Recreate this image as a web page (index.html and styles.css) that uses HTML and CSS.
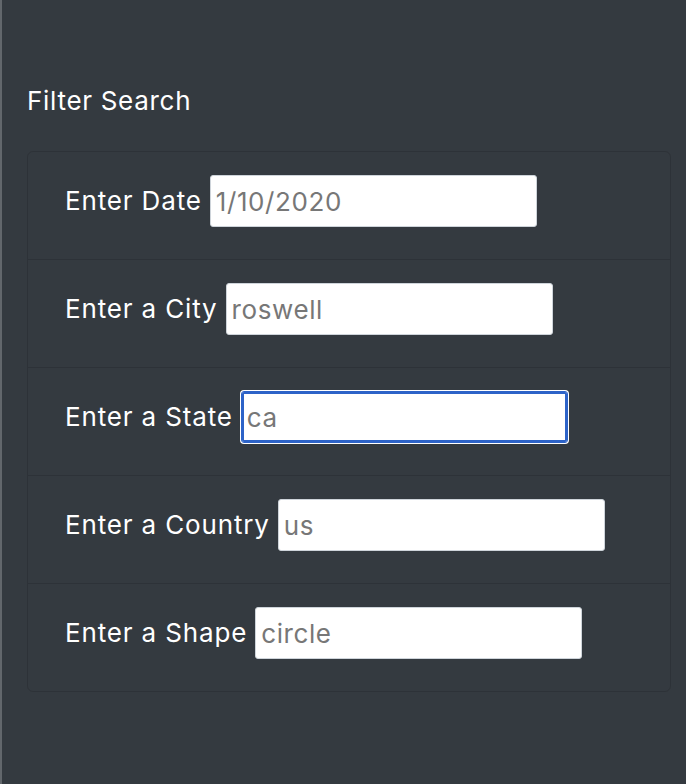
FILE: index.html
```html
<!DOCTYPE html>
<html lang="en">
<head>
<meta charset="utf-8">
<title>Filter Search</title>
<link rel="stylesheet" href="styles.css">
</head>
<body>
<aside class="sidebar">
  <h5 class="title">Filter Search</h5>
  <form class="card">
    <ul class="list">
      <li class="item">
        <label class="label" for="date">Enter Date</label>
        <input class="field" id="date" type="text" value="1/10/2020">
      </li>
      <li class="item">
        <label class="label" for="city">Enter a City</label>
        <input class="field" id="city" type="text" value="roswell">
      </li>
      <li class="item">
        <label class="label" for="state">Enter a State</label>
        <input class="field focused" id="state" type="text" value="ca">
      </li>
      <li class="item">
        <label class="label" for="country">Enter a Country</label>
        <input class="field" id="country" type="text" value="us">
      </li>
      <li class="item">
        <label class="label" for="shape">Enter a Shape</label>
        <input class="field" id="shape" type="text" value="circle">
      </li>
    </ul>
  </form>
</aside>
</body>
</html>
```

FILE: styles.css
```css
html, body {
  margin: 0;
  padding: 0;
  height: 100%;
}
body {
  background: #343a40;
  border-left: 2px solid #62676c;
  box-sizing: border-box;
  font-family: Inter, "Liberation Sans", sans-serif;
  color: #fff;
}
.sidebar {
  padding: 85px 15px 0 25px;
}
.title {
  margin: 0 0 35px 0;
  font-size: 26px;
  line-height: 31px;
  font-weight: 400;
  letter-spacing: 0.7px;
}
.card {
  margin: 0;
  border: 1px solid rgba(0, 0, 0, 0.125);
  border-radius: 6px;
}
.list {
  list-style: none;
  margin: 0;
  padding: 0;
}
.item {
  display: flex;
  align-items: center;
  gap: 8px;
  padding: 23px 37px 32px;
  border-top: 1px solid rgba(0, 0, 0, 0.125);
}
.item:first-child {
  border-top: 0;
}
.label {
  font-size: 26px;
  line-height: 52px;
  letter-spacing: 0.85px;
}
.field {
  box-sizing: border-box;
  width: 327px;
  height: 52px;
  margin: 0;
  padding: 0 5px;
  border: 1px solid #ced4da;
  border-radius: 3px;
  background: #fff;
  font-family: Inter, "Liberation Sans", sans-serif;
  font-size: 26px;
  letter-spacing: 0.6px;
  color: #777;
  outline: none;
}
.focused {
  border-color: #2d63c8;
  box-shadow: inset 0 0 0 2px #2d63c8, 0 0 0 1px #fff;
}
```
